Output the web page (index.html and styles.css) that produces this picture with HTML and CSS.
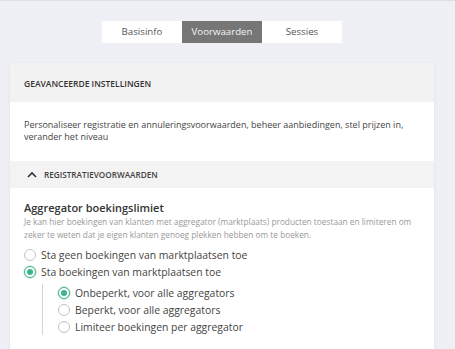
FILE: index.html
```html
<!DOCTYPE html>
<html lang="nl">
<head>
    <meta charset="UTF-8">
    <meta name="viewport" content="width=device-width, initial-scale=1.0">
    <title>Voorwaarden</title>
    <link rel="stylesheet" href="styles.css">
</head>
<body>
    <div class="page">
        <nav class="tabs">
            <a class="tab">Basisinfo</a>
            <a class="tab active">Voorwaarden</a>
            <a class="tab">Sessies</a>
        </nav>

        <section class="card">
            <div class="card-header">GEAVANCEERDE INSTELLINGEN</div>
            <p class="card-intro">Personaliseer registratie en annuleringsvoorwaarden, beheer aanbiedingen, stel prijzen in, verander het niveau</p>

            <div class="section-header">
                <svg class="chevron" width="10" height="7" viewBox="0 0 10 7">
                    <path d="M1 6 L5 2 L9 6" fill="none" stroke="#333" stroke-width="1.6"/>
                </svg>
                <span>REGISTRATIEVOORWAARDEN</span>
            </div>

            <div class="section-body">
                <h3 class="field-title">Aggregator boekingslimiet</h3>
                <p class="field-help">Je kan hier boekingen van klanten met aggregator (marktplaats) producten toestaan en limiteren om zeker te weten dat je eigen klanten genoeg plekken hebben om te boeken.</p>

                <label class="radio"><span class="dot"></span>Sta geen boekingen van marktplaatsen toe</label>
                <label class="radio"><span class="dot checked"></span>Sta boekingen van marktplaatsen toe</label>

                <div class="sub-options">
                    <label class="radio"><span class="dot checked"></span>Onbeperkt, voor alle aggregators</label>
                    <label class="radio"><span class="dot"></span>Beperkt, voor alle aggregators</label>
                    <label class="radio"><span class="dot"></span>Limiteer boekingen per aggregator</label>
                </div>
            </div>
        </section>
    </div>
</body>
</html>
```

FILE: styles.css
```css
body {
    font-family: 'Open Sans', 'Noto Sans', sans-serif;
    background-color: #eef0f5;
    margin: 0;
    padding: 0;
    color: #444;
    border-top: 1px solid #dcdfe5;
    overflow: hidden;
}
.page {
    padding: 20px 21px 0 10px;
}
.tabs {
    display: flex;
    justify-content: center;
}
.tab {
    width: 80px;
    height: 22px;
    line-height: 22px;
    text-align: center;
    background-color: #ffffff;
    font-size: 9.7px;
    color: #555;
}
.tab.active {
    background-color: #767676;
    color: #f4f4f4;
}

.card {
    margin-top: 20px;
    background-color: #ffffff;
    box-shadow: 0 1px 3px rgba(0, 0, 0, 0.08);
    height: 300px;
}
.card-header {
    background-color: #f2f2f2;
    height: 39px;
    line-height: 42px;
    padding-left: 14px;
    font-size: 8.5px;
    font-weight: 600;
    color: #333;
}
.card-intro {
    margin: 0;
    padding: 17px 14px 18px;
    font-size: 9px;
    line-height: 12px;
    color: #444;
}
.section-header {
    background-color: #f3f3f3;
    height: 27px;
    display: flex;
    align-items: center;
    padding-left: 17px;
    font-size: 8.2px;
    font-weight: 600;
    color: #444;
}
.chevron {
    margin-right: 7px;
}
.section-body {
    padding: 12px 14px 0;
}
.field-title {
    margin: 0;
    font-size: 11px;
    font-weight: 600;
    color: #333;
    line-height: 15px;
}
.field-help {
    margin: 0 0 5px;
    font-size: 8.3px;
    line-height: 13px;
    color: #999;
}
.radio {
    display: flex;
    align-items: center;
    height: 17px;
    font-size: 10.4px;
    color: #444;
}
.dot {
    width: 10px;
    height: 10px;
    border: 1px solid #c4c4c4;
    border-radius: 50%;
    margin-right: 5px;
    box-sizing: content-box;
    position: relative;
    background: #fff;
}
.dot.checked {
    border-color: #3bb58a;
    box-shadow: 0 0 0 1px #d7efe6;
}
.dot.checked::after {
    content: '';
    position: absolute;
    top: 2px;
    left: 2px;
    width: 6px;
    height: 6px;
    border-radius: 50%;
    background-color: #3bb58a;
}
.sub-options {
    margin: 4px 0 0 18px;
    padding-left: 15px;
    border-left: 1px solid #d4d4d4;
}
```
